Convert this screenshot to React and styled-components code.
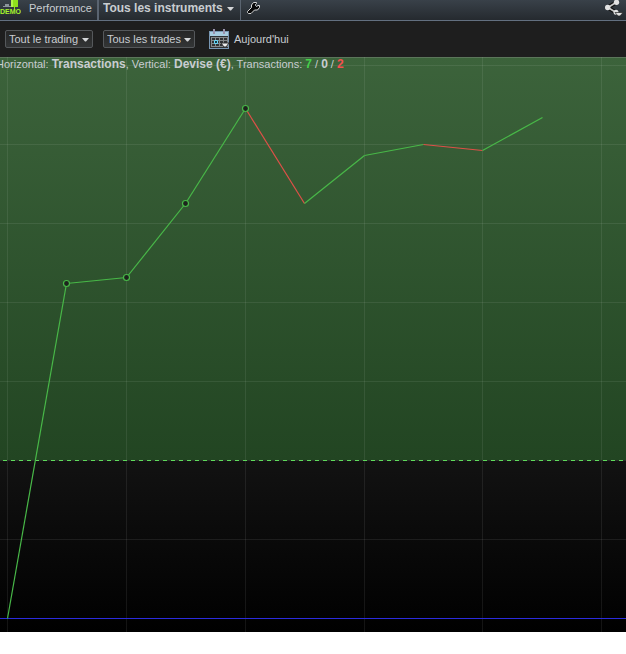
import React from "react";
import styled, { createGlobalStyle } from "styled-components";

const GlobalStyle = createGlobalStyle`
  body {
    margin: 0;
    background: #fff;
    color: #c9cdd1;
    font: 11px/14px "Liberation Sans", Arial, sans-serif;
  }
`;

const Header = styled.header`
  display: flex;
  align-items: stretch;
  height: 20px;
  background: linear-gradient(#394149, #252a2f);
  border-bottom: 1px solid #637080;
`;

const Logo = styled.div`
  display: flex;
  width: 21px;
  margin-right: 8px;
`;

const Title = styled.h1`
  margin: 0;
  padding: 1px 5px 0 0;
  font-size: 11px;
  font-weight: normal;
  line-height: 14px;
`;

const Separator = styled.span`
  width: ${(props) => (props.$wide ? 2 : 1)}px;
  background: #5a6470;
`;

// The native arrow is hidden, the caret is laid over the right side of the select
const SelectBox = styled.label`
  position: relative;
  display: flex;
  svg {
    position: absolute;
    right: ${(props) => (props.$plain ? 6 : 4)}px;
    top: ${(props) => (props.$plain ? 7 : 8)}px;
    pointer-events: none;
  }
`;

const Select = styled.select`
  appearance: none;
  box-sizing: border-box;
  height: 18px;
  margin: 0;
  padding: 0 13px 0 3px;
  border: 1px solid #55585b;
  border-radius: 2px;
  background: linear-gradient(#262626, #333536);
  color: inherit;
  font: inherit;
`;

const InstrumentSelect = styled(Select)`
  padding: 0 17px 2px 4px;
  border: 0;
  background: none;
  font-weight: bold;
  font-size: 12px;
`;

const IconButton = styled.button`
  display: flex;
  margin: 0;
  padding: 0;
  border: 0;
  background: none;
  color: inherit;
  font: inherit;
`;

const SettingsButton = styled(IconButton)`
  padding: 1px 0 0 6px;
`;

const ShareButton = styled(IconButton)`
  margin-left: auto;
  padding-right: 3px;
`;

const Toolbar = styled.div`
  display: flex;
  align-items: center;
  gap: 10px;
  height: 36px;
  padding-left: 5px;
  background: #1e1e1e;
`;

const DateButton = styled(IconButton)`
  align-items: center;
  gap: 4px;
  margin-left: 4px;
`;

const ChartPanel = styled.main`
  position: relative;
  overflow: hidden;
  background: #000;
`;

const Chart = styled.svg`
  display: block;
  width: 100%;
  height: auto;
`;

const Legend = styled.p`
  position: absolute;
  top: 0;
  left: -4px;
  margin: 0;
  white-space: nowrap;
  b {
    font-size: 12px;
  }
`;

const Gain = styled.b`
  color: #45d14a;
`;

const Loss = styled.b`
  color: #f45050;
`;

const LogoIcon = () => (
  <svg width="21" height="20" viewBox="0 0 21 20" aria-label="Demo" role="img">
    <path d="M5 4h4v2H5zM3 6h8v1H3z" fill="#8b949b" />
    <path d="M11 0h7v7h-7z" fill="#8fe01c" />
    <path d="M11 0h2v7h-2z" fill="#b0f34a" />
    <path d="M14.5 7v2" stroke="#8fe01c" />
    <text
      x="0"
      y="14"
      fill="#a6f22b"
      fontFamily="Liberation Sans, sans-serif"
      fontWeight="bold"
      fontSize="7"
    >
      DEMO
    </text>
  </svg>
);

const Caret = () => (
  <svg width="7" height="4" viewBox="0 0 7 4" aria-hidden="true">
    <path d="M0 0h7L4 3.5H3z" fill="#d4d6d8" />
  </svg>
);

const WrenchIcon = () => (
  <svg width="14" height="14" viewBox="0 0 14 14" aria-hidden="true">
    <path
      d="M4.5 4L6.5 1.5H9.5V2.5L8.5 3.5V4.5L9.5 5.5L11 4.5H12.5V6.5L10.5 9H7.5L4 12.5H1.5L.5 11.5V10.5L4.5 6.5z"
      fill="#080808"
      stroke="#d8d8d8"
    />
  </svg>
);

const ShareIcon = () => (
  <svg width="18" height="17" viewBox="0 0 18 17" aria-hidden="true">
    <path d="M3 7.5L11 2.5M3 7.5L11 12.5" stroke="#111" strokeWidth="4" />
    <path d="M3 7.5L11 2.5M3 7.5L11 12.5" stroke="#c9c9c9" strokeWidth="1.5" />
    <g fill="#e2e2e2">
      <circle cx="11.5" cy="2.3" r="2.7" />
      <circle cx="2.7" cy="7.5" r="2.7" />
      <circle cx="11" cy="12.3" r="2.5" />
    </g>
    <path d="M10 12.5h8L15 16h-2z" fill="#e2e2e2" stroke="#222" strokeWidth=".7" />
  </svg>
);

const CalendarIcon = () => (
  <svg width="21" height="20" viewBox="0 0 21 20" aria-hidden="true">
    <path d="M0 2h20v18H0z" fill="#7897b4" />
    <path d="M1 3h18v4H1z" fill="#a8cde0" />
    <path d="M1 7h18v12H1z" fill="#303234" />
    <path
      d="M2.5 8v10M6.5 8v10M10.5 8v10M14.5 8v10M18.5 8v10M2 8.5h17M2 11.5h17M2 14.5h17M2 17.5h17"
      stroke="#85898b"
    />
    <path d="M5.5 11.5h3v3h-3z" fill="#173a48" stroke="#69d9f7" />
    <path d="M4 0h2v5H4zM14 0h2v5h-2z" fill="#9b93ad" />
    <path d="M12 14h8l-3 4h-2z" fill="#eee" stroke="#303234" />
  </svg>
);

const columns = [7, 126, 245, 364, 482, 601];
const rows = [8, 87, 166, 245, 324, 482];

// Cumulated result after each transaction, closed days have a marker
const points = [
  { x: 7, y: 561 },
  { x: 66, y: 226, marker: true },
  { x: 126, y: 220, marker: true },
  { x: 185, y: 146, marker: true },
  { x: 245, y: 51, marker: true },
  { x: 304, y: 146 },
  { x: 364, y: 98 },
  { x: 423, y: 87 },
  { x: 482, y: 93 },
  { x: 542, y: 60 },
];

const PerformanceChart = () => (
  <Chart viewBox="0 0 626 575" role="img" aria-label="Performance">
    <defs>
      <linearGradient id="gain" x1="0" y1="0" x2="0" y2="1">
        <stop offset="0" stopColor="#3c633b" />
        <stop offset="1" stopColor="#224522" />
      </linearGradient>
      <linearGradient id="base" x1="0" y1="0" x2="0" y2="1">
        <stop offset="0" stopColor="#121212" />
        <stop offset="1" stopColor="#000" />
      </linearGradient>
    </defs>
    <rect width="626" height="404" fill="url(#gain)" />
    <rect y="404" width="626" height="171" fill="url(#base)" />
    <path d="M0 .5H626" stroke="#5b765a" />
    <g stroke="#fff" strokeOpacity=".08">
      {columns.map((x) => (
        <path key={x} d={`M${x + 0.5} 0V575`} />
      ))}
      {rows.map((y) => (
        <path key={y} d={`M0 ${y + 0.5}H626`} />
      ))}
    </g>
    <path d="M0 403.5H626" stroke="#292d29" />
    <path d="M-5 403.5H626" stroke="#5fdc5c" strokeDasharray="4 4" />
    <path d="M0 561.5H626" stroke="#2b2bdc" />
    {points.slice(1).map((point, i) => (
      <path
        key={point.x}
        d={`M${points[i].x + 0.5} ${points[i].y + 0.5}L${point.x + 0.5} ${point.y + 0.5}`}
        stroke={point.y > points[i].y ? "#df5048" : "#48b848"}
        strokeWidth="1.2"
      />
    ))}
    {points
      .filter((point) => point.marker)
      .map((point) => (
        <circle
          key={point.x}
          cx={point.x + 0.5}
          cy={point.y + 0.5}
          r="3"
          fill="#1d241d"
          stroke="#48b848"
          strokeWidth="1.2"
        />
      ))}
  </Chart>
);

const App = () => (
  <>
    <GlobalStyle />
    <Header>
      <Logo>
        <LogoIcon />
      </Logo>
      <Title>Performance</Title>
      <Separator $wide />
      <SelectBox $plain>
        <InstrumentSelect aria-label="Instruments">
          <option>Tous les instruments</option>
        </InstrumentSelect>
        <Caret />
      </SelectBox>
      <Separator />
      <SettingsButton aria-label="Configurer">
        <WrenchIcon />
      </SettingsButton>
      <ShareButton aria-label="Partager">
        <ShareIcon />
      </ShareButton>
    </Header>
    <Toolbar>
      <SelectBox>
        <Select aria-label="Trading">
          <option>Tout le trading</option>
        </Select>
        <Caret />
      </SelectBox>
      <SelectBox>
        <Select aria-label="Trades">
          <option>Tous les trades</option>
        </Select>
        <Caret />
      </SelectBox>
      <DateButton>
        <CalendarIcon />
        Aujourd'hui
      </DateButton>
    </Toolbar>
    <ChartPanel>
      <PerformanceChart />
      <Legend>
        Horizontal: <b>Transactions</b>, Vertical: <b>Devise (€)</b>,
        Transactions: <Gain>7</Gain> / <b>0</b> / <Loss>2</Loss>
      </Legend>
    </ChartPanel>
  </>
);

export default App;
